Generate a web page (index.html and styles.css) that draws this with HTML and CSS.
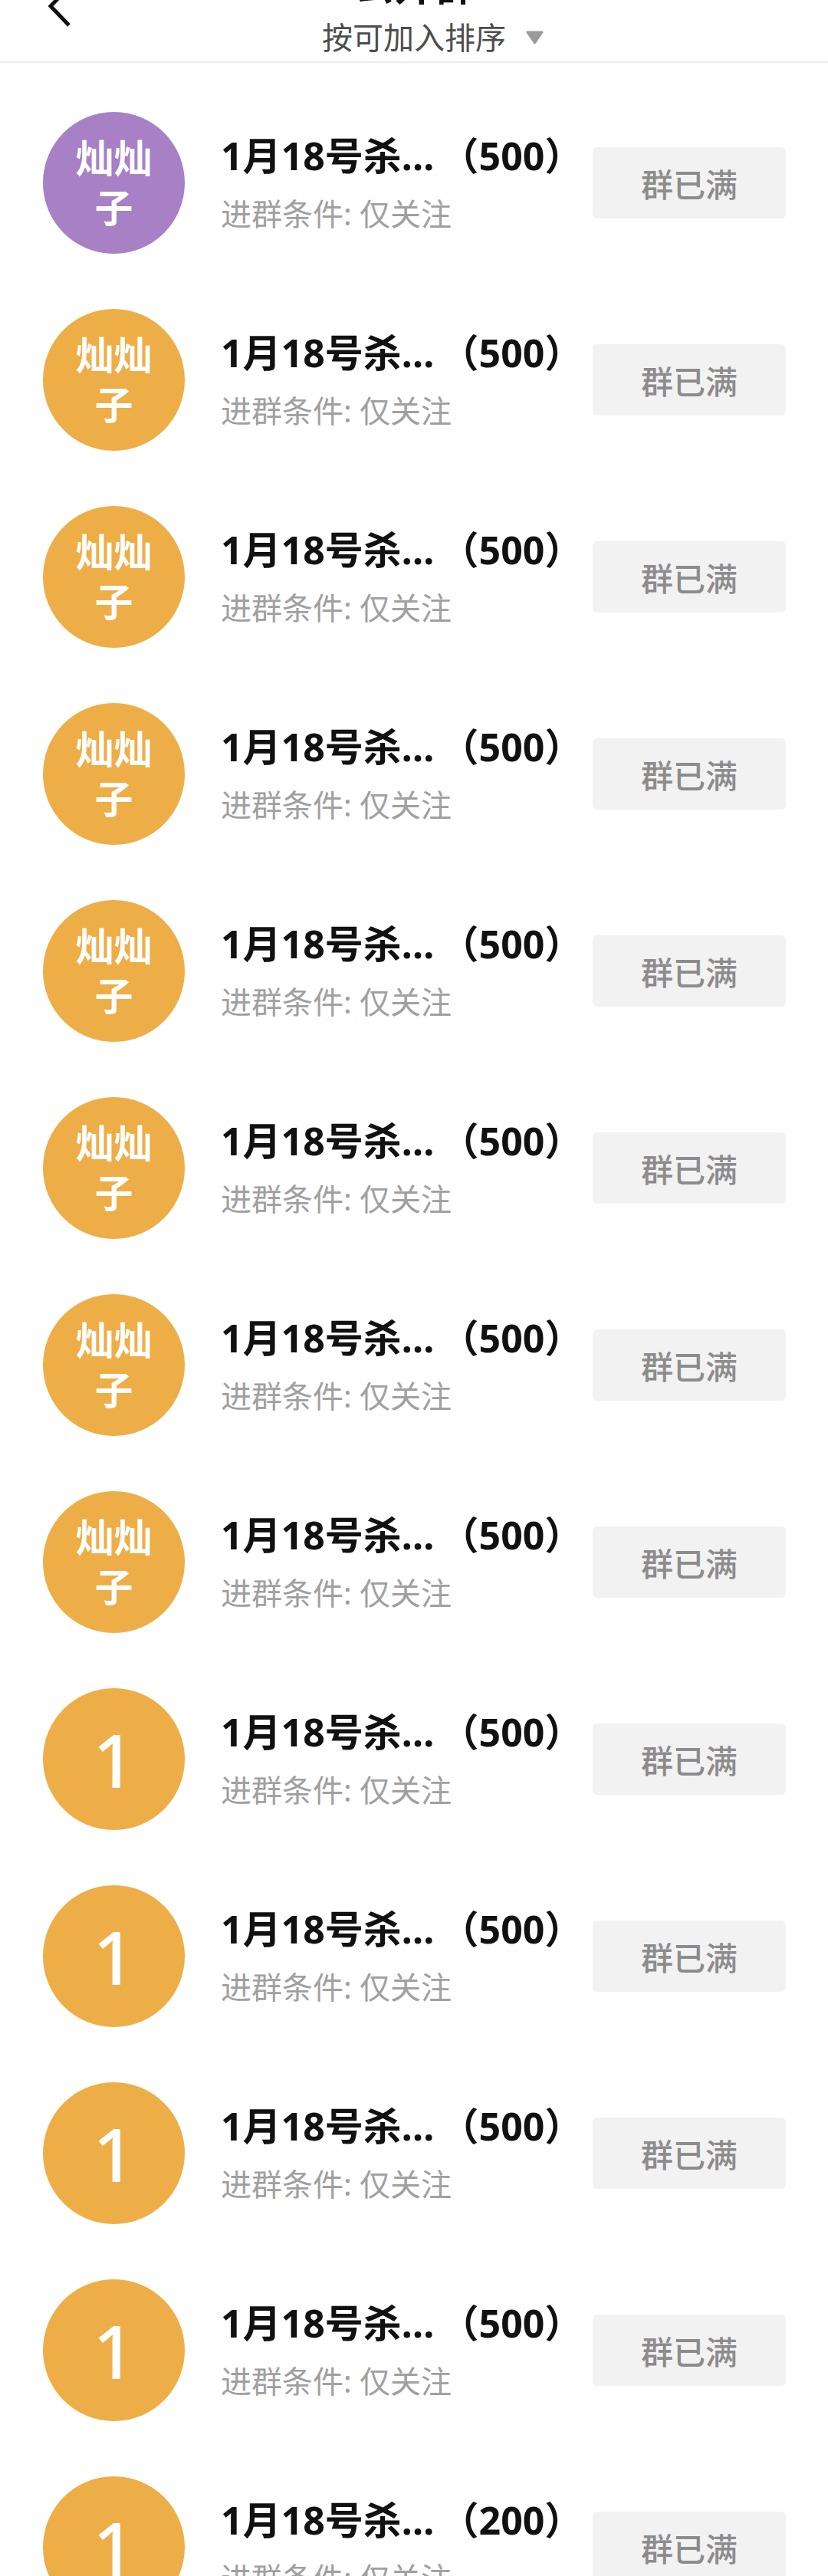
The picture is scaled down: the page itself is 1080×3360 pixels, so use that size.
FILE: index.html
```html
<!DOCTYPE html>
<html lang="zh-CN">
<head>
    <meta charset="UTF-8">
    <meta name="viewport" content="width=device-width, initial-scale=1.0">
    <title>公开群</title>
    <link rel="stylesheet" href="styles.css">
</head>
<body>
    <div class="page">
        <div class="topbar">
            <div class="back">
                <svg width="40" height="40" viewBox="0 0 40 40">
                    <path d="M34 -17 L10 8 L34 33" fill="none" stroke="#111" stroke-width="5"/>
                </svg>
            </div>
            <div class="heading">
                <div class="heading-title">公开群</div>
                <div class="sort">
                    <span>按可加入排序</span>
                    <svg width="25" height="18" viewBox="0 0 25 18">
                        <path d="M3 2 L22 2 L12.5 16 Z" fill="#9a9a9a" stroke="#9a9a9a" stroke-width="3" stroke-linejoin="round"/>
                    </svg>
                </div>
            </div>
            <div></div>
        </div>

        <div class="list">
            <div class="row">
                <div class="avatar purple"><span class="avatar-name">灿灿子</span></div>
                <div class="info">
                    <div class="name">1月18号杀…<span class="count">（500）</span></div>
                    <div class="cond">进群条件: 仅关注</div>
                </div>
                <div class="full">群已满</div>
            </div>
            <div class="row">
                <div class="avatar"><span class="avatar-name">灿灿子</span></div>
                <div class="info">
                    <div class="name">1月18号杀…<span class="count">（500）</span></div>
                    <div class="cond">进群条件: 仅关注</div>
                </div>
                <div class="full">群已满</div>
            </div>
            <div class="row">
                <div class="avatar"><span class="avatar-name">灿灿子</span></div>
                <div class="info">
                    <div class="name">1月18号杀…<span class="count">（500）</span></div>
                    <div class="cond">进群条件: 仅关注</div>
                </div>
                <div class="full">群已满</div>
            </div>
            <div class="row">
                <div class="avatar"><span class="avatar-name">灿灿子</span></div>
                <div class="info">
                    <div class="name">1月18号杀…<span class="count">（500）</span></div>
                    <div class="cond">进群条件: 仅关注</div>
                </div>
                <div class="full">群已满</div>
            </div>
            <div class="row">
                <div class="avatar"><span class="avatar-name">灿灿子</span></div>
                <div class="info">
                    <div class="name">1月18号杀…<span class="count">（500）</span></div>
                    <div class="cond">进群条件: 仅关注</div>
                </div>
                <div class="full">群已满</div>
            </div>
            <div class="row">
                <div class="avatar"><span class="avatar-name">灿灿子</span></div>
                <div class="info">
                    <div class="name">1月18号杀…<span class="count">（500）</span></div>
                    <div class="cond">进群条件: 仅关注</div>
                </div>
                <div class="full">群已满</div>
            </div>
            <div class="row">
                <div class="avatar"><span class="avatar-name">灿灿子</span></div>
                <div class="info">
                    <div class="name">1月18号杀…<span class="count">（500）</span></div>
                    <div class="cond">进群条件: 仅关注</div>
                </div>
                <div class="full">群已满</div>
            </div>
            <div class="row">
                <div class="avatar"><span class="avatar-name">灿灿子</span></div>
                <div class="info">
                    <div class="name">1月18号杀…<span class="count">（500）</span></div>
                    <div class="cond">进群条件: 仅关注</div>
                </div>
                <div class="full">群已满</div>
            </div>
            <div class="row">
                <div class="avatar"><span class="avatar-num">1</span></div>
                <div class="info">
                    <div class="name">1月18号杀…<span class="count">（500）</span></div>
                    <div class="cond">进群条件: 仅关注</div>
                </div>
                <div class="full">群已满</div>
            </div>
            <div class="row">
                <div class="avatar"><span class="avatar-num">1</span></div>
                <div class="info">
                    <div class="name">1月18号杀…<span class="count">（500）</span></div>
                    <div class="cond">进群条件: 仅关注</div>
                </div>
                <div class="full">群已满</div>
            </div>
            <div class="row">
                <div class="avatar"><span class="avatar-num">1</span></div>
                <div class="info">
                    <div class="name">1月18号杀…<span class="count">（500）</span></div>
                    <div class="cond">进群条件: 仅关注</div>
                </div>
                <div class="full">群已满</div>
            </div>
            <div class="row">
                <div class="avatar"><span class="avatar-num">1</span></div>
                <div class="info">
                    <div class="name">1月18号杀…<span class="count">（500）</span></div>
                    <div class="cond">进群条件: 仅关注</div>
                </div>
                <div class="full">群已满</div>
            </div>
            <div class="row">
                <div class="avatar"><span class="avatar-num">1</span></div>
                <div class="info">
                    <div class="name">1月18号杀…<span class="count">（200）</span></div>
                    <div class="cond">进群条件: 仅关注</div>
                </div>
                <div class="full">群已满</div>
            </div>
        </div>
    </div>
</body>
</html>
```

FILE: styles.css
```css
body {
    margin: 0;
    background: #fff;
    color: #111;
    font-family: "Noto Sans", "Noto Sans CJK SC", sans-serif;
}
.page { width: 1080px; height: 3360px; overflow: hidden; }

/* top bar */
.topbar {
    display: grid;
    grid-template-columns: 1fr auto 1fr;
    height: 80px;
    border-bottom: 2px solid #ececec;
    overflow: hidden;
}
.back { padding-left: 56px; }
.back svg { display: block; overflow: visible; }
.heading { text-align: center; }
.heading-title {
    margin-top: -45px;
    font-size: 52px;
    line-height: 52px;
    font-weight: 700;
}
.sort {
    display: flex;
    justify-content: center;
    align-items: center;
    gap: 25px;
    margin-top: 18px;
    padding-left: 50px;
    font-size: 40px;
    line-height: 48px;
    color: #4d4d4d;
}

/* group list */
.list { padding-top: 28px; }
.row {
    display: flex;
    align-items: center;
    height: 257px;
    padding: 0 55px 0 56px;
}
.avatar {
    flex: none;
    width: 185px;
    height: 185px;
    border-radius: 50%;
    background: #eeae47;
    color: #fff;
    display: flex;
    justify-content: center;
    align-items: center;
}
.avatar.purple { background: #a780c6; }
.avatar-name {
    width: 110px;
    font-size: 50px;
    line-height: 65px;
    font-weight: 700;
    text-align: center;
}
.avatar-num { font-size: 96px; line-height: 1; font-weight: 500; }
.info { flex: 1; margin-left: 47px; padding-top: 4px; }
.name {
    font-size: 50px;
    line-height: 60px;
    font-weight: 700;
    white-space: nowrap;
}
.count { margin-left: 8px; }
.cond {
    margin-top: 16px;
    font-size: 40px;
    line-height: 60px;
    color: #a0a0a0;
}
.full {
    flex: none;
    width: 252px;
    height: 93px;
    border-radius: 6px;
    background: #f2f2f2;
    color: #8c8c8c;
    font-size: 42px;
    font-weight: 500;
    display: flex;
    justify-content: center;
    align-items: center;
}
```
